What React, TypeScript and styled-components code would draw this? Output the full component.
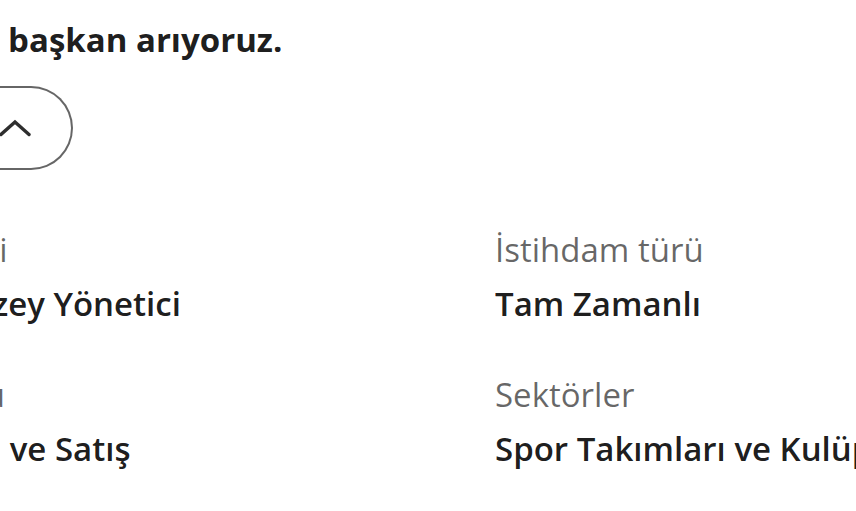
import styled, { createGlobalStyle } from 'styled-components'

const GlobalStyle = createGlobalStyle`
  html, body {
    margin: 0;
    padding: 0;
    background: #ffffff;
  }
  body {
    font-family: "Open Sans", "Noto Sans", sans-serif;
    color: rgba(0, 0, 0, 0.9);
  }
`

const Page = styled.div`
  width: 856px;
  height: 511px;
  overflow: hidden;
  background: #ffffff;
`

const Content = styled.div`
  margin-left: -198px;
  padding-top: 18px;
  width: 1400px;
`

const Headline = styled.h2`
  margin: 0;
  font-size: 33px;
  line-height: 44px;
  font-weight: 700;
  color: rgba(0, 0, 0, 0.9);
  white-space: nowrap;
`

const ToggleButton = styled.button`
  margin-top: 24px;
  box-sizing: border-box;
  width: 271px;
  height: 84px;
  display: flex;
  align-items: center;
  justify-content: flex-end;
  gap: 16px;
  padding: 0 40px 0 0;
  background: #ffffff;
  border: 2px solid rgba(0, 0, 0, 0.6);
  border-radius: 42px;
  font-family: inherit;
  font-size: 24px;
  font-weight: 600;
  color: rgba(0, 0, 0, 0.75);
  cursor: pointer;
`

const DetailsGrid = styled.ul`
  list-style: none;
  margin: 58px 0 0;
  padding: 0;
  display: grid;
  grid-template-columns: 693px 693px;
  row-gap: 47px;
`

const DetailItem = styled.li`
  display: flex;
  flex-direction: column;
  gap: 10px;
  white-space: nowrap;
`

const DetailLabel = styled.span`
  font-size: 33px;
  line-height: 44px;
  font-weight: 400;
  color: rgba(0, 0, 0, 0.6);
`

const DetailValue = styled.span`
  font-size: 33px;
  line-height: 44px;
  font-weight: 600;
  color: rgba(0, 0, 0, 0.9);
`

function ChevronUp() {
  return (
    <svg width="32" height="18" viewBox="0 0 32 18" aria-hidden="true">
      <polyline
        points="2,15.5 16,3 30,15.5"
        fill="none"
        stroke="rgba(0,0,0,0.82)"
        strokeWidth="3.4"
        strokeLinecap="round"
        strokeLinejoin="miter"
      />
    </svg>
  )
}

const details = [
  { label: 'Kıdem düzeyi', value: 'Orta-Üst Düzey Yönetici' },
  { label: 'İstihdam türü', value: 'Tam Zamanlı' },
  { label: 'İş fonksiyonu', value: 'İş Geliştirme ve Satış' },
  { label: 'Sektörler', value: 'Spor Takımları ve Kulüpler' },
]

export default function App() {
  return (
    <>
      <GlobalStyle />
      <Page>
        <Content>
          <Headline>Vizyoner bir başkan arıyoruz.</Headline>
          <ToggleButton type="button">
            <span>Daha az göster</span>
            <ChevronUp />
          </ToggleButton>
          <DetailsGrid>
            {details.map(item => (
              <DetailItem key={item.label}>
                <DetailLabel>{item.label}</DetailLabel>
                <DetailValue>{item.value}</DetailValue>
              </DetailItem>
            ))}
          </DetailsGrid>
        </Content>
      </Page>
    </>
  )
}
